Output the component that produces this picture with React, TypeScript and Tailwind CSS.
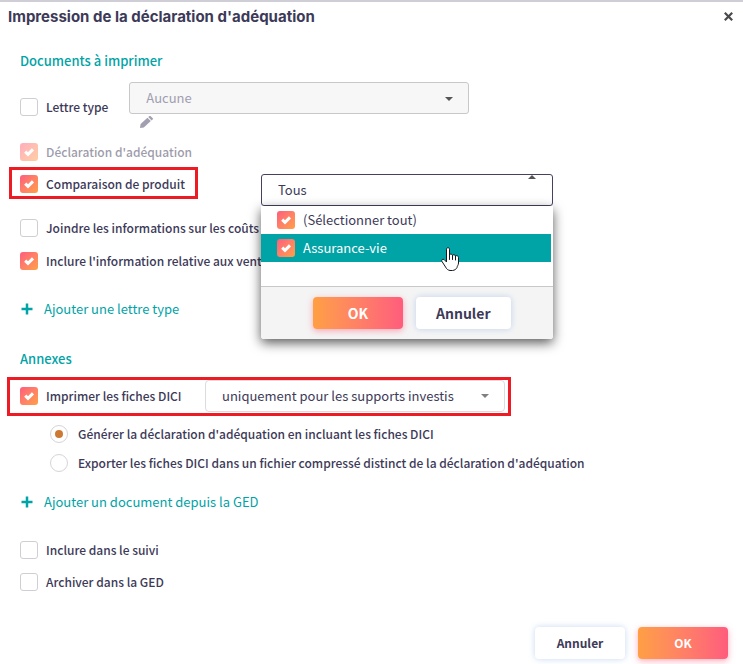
import { useState } from "react";
import type { ReactNode } from "react";
import { clsx } from "clsx";

interface CheckProps {
  label: string;
  defaultChecked?: boolean;
  disabled?: boolean;
  className?: string;
}

function Check({ label, defaultChecked, disabled, className }: CheckProps) {
  return (
    <label className={clsx("flex items-center gap-2 whitespace-nowrap leading-[18px]", disabled && "opacity-50", className)}>
      <span className="relative block w-[18px] h-[18px] shrink-0">
        <input
          type="checkbox"
          defaultChecked={defaultChecked}
          disabled={disabled}
          className="peer block appearance-none w-[18px] h-[18px] rounded-[3px] border border-[#cfced4] bg-white checked:border-0 checked:bg-linear-to-br checked:from-[#ff5c7c] checked:to-[#ff9f43]"
        />
        <svg
          viewBox="0 0 18 18"
          className="absolute inset-0 w-[18px] h-[18px] text-white pointer-events-none hidden peer-checked:block"
          fill="none"
          stroke="currentColor"
          strokeWidth="3"
        >
          <path d="M5.2 8.6l2.8 2.8L13 6.4" />
        </svg>
      </span>
      {label}
    </label>
  );
}

function Radio({ label, defaultChecked }: { label: string; defaultChecked?: boolean }) {
  return (
    <label className="flex items-center gap-[10px] leading-[18px]">
      <span className="relative block w-[18px] h-[18px] shrink-0">
        <input
          type="radio"
          name="dici-mode"
          defaultChecked={defaultChecked}
          className="peer block appearance-none w-[18px] h-[18px] rounded-full border border-[#d5d4da] bg-white"
        />
        <span className="absolute left-[5px] top-[5px] w-2 h-2 rounded-full bg-[#cc7a33] hidden peer-checked:block" />
      </span>
      {label}
    </label>
  );
}

function Caret({ className }: { className?: string }) {
  return (
    <svg viewBox="0 0 8 4" className={clsx("absolute w-2 h-1 pointer-events-none", className)} fill="currentColor">
      <path d="M0 0h8L4 4z" />
    </svg>
  );
}

function AddLink({ children }: { children: ReactNode }) {
  return (
    <a href="#" className="flex items-center gap-[11px] w-fit px-px font-normal text-[13px] leading-5 text-[#00a3a6]">
      <svg viewBox="0 0 12 12" className="w-3 h-3" stroke="currentColor" strokeWidth="2.5">
        <path d="M6 .5v11M.5 6h11" />
      </svg>
      {children}
    </a>
  );
}

function Button({ children, primary, className }: { children: ReactNode; primary?: boolean; className?: string }) {
  return (
    <button
      type="button"
      className={clsx(
        "h-8 px-5 min-w-[90px] rounded font-bold",
        primary
          ? "text-white bg-linear-to-r from-[#ff9f43] to-[#ff5c7c] shadow-[0_2px_6px_rgba(255,92,124,0.5)]"
          : "bg-white shadow-[0_0_6px_rgba(120,160,225,0.4)]",
        className
      )}
    >
      {children}
    </button>
  );
}

function HandCursor() {
  return (
    <svg viewBox="0 0 18 24" className="absolute left-[180px] top-[41px] w-[18px] h-6 pointer-events-none">
      <path
        d="M5.5 15V2.2C5.5 .2 8.5 .2 8.5 2.2V8c.2-1.3 3-1.2 3 .5.3-1.2 3-1 3 .7.3-1 3-.8 3 1.1V16c0 2-1.5 3.3-1.5 4.6-.8 1.6-2.4 2.7-4.5 2.9H9c-2-.3-3.6-1.6-4.4-3.4L1 14.5c-1-1.6.7-3 2.2-1.9z"
        fill="#fff"
        stroke="#16181f"
        strokeWidth="1"
        strokeLinejoin="round"
      />
      <path d="M8.5 8v4.5M11.5 8.5v4M14.5 9.2v3.8" stroke="#16181f" strokeWidth="1" strokeLinecap="round" fill="none" />
    </svg>
  );
}

function ProductFilter() {
  const [open, setOpen] = useState(true);

  return (
    <div className="relative w-[292px] font-normal text-[13px]">
      <button
        type="button"
        aria-haspopup="listbox"
        aria-expanded={open}
        onClick={() => setOpen(!open)}
        className="relative block w-full h-8 px-4 rounded-[3px] border border-[#45425f] bg-white text-left"
      >
        Tous
        <Caret className="right-4 top-0 rotate-180 text-[#555]" />
      </button>
      {open && (
        <div className="absolute z-10 left-0 top-full w-full rounded-b-[3px] bg-white shadow-[0_4px_12px_rgba(0,0,0,0.65)]">
          <div className="h-[81px] border-b border-[#c8c8c8]">
            <Check label="(Sélectionner tout)" defaultChecked className="h-7 pl-4 mr-[2px] bg-white" />
            <Check label="Assurance-vie" defaultChecked className="h-7 pl-4 mr-[2px] bg-[#00a3a6] text-white" />
          </div>
          <div className="flex gap-[13px] pl-[52px] py-[10px] rounded-b-[3px] bg-[#f4f4f4]">
            <Button primary className="text-sm">OK</Button>
            <Button className="text-sm">Annuler</Button>
          </div>
          <HandCursor />
        </div>
      )}
    </div>
  );
}

export default function App() {
  return (
    <div className="bg-white border-t-2 border-[#cfced6] text-[#3d3a58] text-[12px] font-medium font-['Noto_Sans_CJK_JP',sans-serif]">
      <header className="flex items-center justify-between h-[29px] pl-2 pr-[10px]">
        <h1 className="text-[15px] leading-5 font-bold font-['Inter',sans-serif]">Impression de la déclaration d'adéquation</h1>
        <button type="button" aria-label="Fermer" className="text-[#4a4a4a]">
          <svg viewBox="0 0 9 9" className="w-[9px] h-[9px]" stroke="currentColor" strokeWidth="2.2">
            <path d="M.8.8l7.4 7.4M8.2.8L.8 8.2" />
          </svg>
        </button>
      </header>

      <main className="px-5 pt-5">
        <h2 className="text-[13px] leading-5 text-[#00a3a6]">Documents à imprimer</h2>
        <div className="flex items-center gap-[21px] mt-[11px]">
          <Check label="Lettre type" />
          <div>
            <div className="relative">
              <select
                disabled
                aria-label="Lettre type"
                className="block appearance-none w-[340px] h-8 px-4 rounded-[3px] border border-[#c8c8c8] bg-[#f7f7f7] text-[13px] font-normal text-[#a09eb0] opacity-100"
              >
                <option>Aucune</option>
              </select>
              <Caret className="right-4 top-[15px] text-[#555]" />
            </div>
            <button type="button" aria-label="Modifier" className="flex items-start h-[18px] ml-[11px] pt-[2px] text-[#a2a0b0]">
              <svg viewBox="0 0 13 12" className="block w-[13px] h-3" fill="currentColor">
                <path d="M0 12l.6-3.9L7.4 1.8l3.4 3.3L3.8 11.5z" />
                <path d="M8.2 1.1L9.2.3c.6-.4 1.2-.4 1.7.1l1.7 1.6c.5.5.5 1.1 0 1.6l-.9.9z" />
              </svg>
            </button>
          </div>
        </div>

        <Check label="Déclaration d'adéquation" defaultChecked disabled className="mt-[11px]" />
        <div className="flex items-start gap-[63px] mt-[6px]">
          <div className="-ml-[11px] w-[189px] shrink-0 border-3 border-[#ed1c24] pl-2 pt-[5px] pb-[3px]">
            <Check label="Comparaison de produit" defaultChecked />
          </div>
          <div className="mt-[7px]">
            <ProductFilter />
          </div>
        </div>
        <Check label="Joindre les informations sur les coûts" className="mt-[13px]" />
        <Check label="Inclure l'information relative aux ventes" defaultChecked className="mt-[15px]" />
        <div className="mt-[29px]">
          <AddLink>Ajouter une lettre type</AddLink>
        </div>

        <h2 className="mt-[30px] text-[13px] leading-5 text-[#00a3a6]">Annexes</h2>
        <div className="flex items-center justify-between mt-2 -ml-[13px] w-[504px] border-3 border-[#ed1c24] pl-[10px] pr-[3px] pb-px">
          <Check label="Imprimer les fiches DICI" defaultChecked />
          <div className="relative">
            <select
              aria-label="Supports concernés"
              className="block appearance-none w-[300px] h-8 px-4 rounded border border-[#dcdce0] bg-white text-[13px] font-normal"
            >
              <option>uniquement pour les supports investis</option>
            </select>
            <Caret className="right-4 top-[14px] text-[#808080]" />
          </div>
        </div>
        <div className="flex flex-col gap-[11px] mt-[9px] pl-[30px]">
          <Radio label="Générer la déclaration d'adéquation en incluant les fiches DICI" defaultChecked />
          <Radio label="Exporter les fiches DICI dans un fichier compressé distinct de la déclaration d'adéquation" />
        </div>
        <div className="mt-5">
          <AddLink>Ajouter un document depuis la GED</AddLink>
        </div>
        <Check label="Inclure dans le suivi" className="mt-[29px]" />
        <Check label="Archiver dans la GED" className="mt-[14px]" />
      </main>

      <footer className="flex justify-end gap-[13px] mt-9 pr-[15px] pb-[5px]">
        <Button>Annuler</Button>
        <Button primary>OK</Button>
      </footer>
    </div>
  );
}
